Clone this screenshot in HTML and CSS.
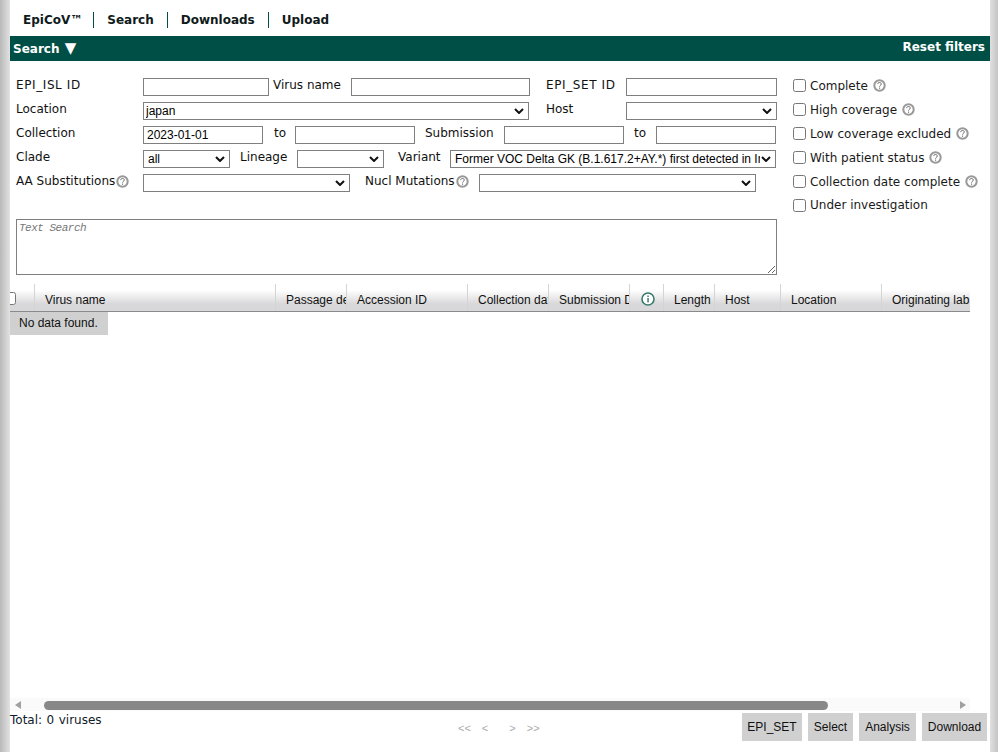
FILE: index.html
```html
<!DOCTYPE html>
<html lang="en">
<head>
<meta charset="utf-8">
<title>EpiCoV Search</title>
<link rel="stylesheet" href="styles.css">
</head>
<body>
<svg class="defs" width="0" height="0" aria-hidden="true">
  <symbol id="help" viewBox="0 0 13 13">
    <circle cx="6.5" cy="6.5" r="5.2" fill="#fff" stroke="#999" stroke-width="2"/>
    <path d="M4.7 5.1c0-1 .8-1.6 1.8-1.6s1.8.6 1.8 1.5c0 1.3-1.7 1.3-1.7 2.6" fill="none" stroke="#666" stroke-width="1"/>
    <rect x="6" y="8.6" width="1.1" height="1.1" fill="#666"/>
  </symbol>
</svg>
<div class="page">
  <nav class="nav">
    <a class="nav-item first">EpiCoV™</a>
    <a class="nav-item">Search</a>
    <a class="nav-item">Downloads</a>
    <a class="nav-item last">Upload</a>
  </nav>
  <div class="bar">
    <span class="bar-title">Search <span class="bar-arrow">▼</span></span>
    <span class="bar-reset">Reset filters</span>
  </div>
  <form class="filters">
    <div class="fields">
      <div class="row">
        <label class="lab l-main caps">EPI_ISL ID</label>
        <input class="ctl w126" type="text">
        <label class="lab l-virus">Virus name</label>
        <input class="ctl w179" type="text">
        <label class="lab l-set caps">EPI_SET ID</label>
        <input class="ctl w151" type="text">
      </div>
      <div class="row">
        <label class="lab l-main">Location</label>
        <select class="ctl w386 pad-sm"><option>japan</option></select>
        <label class="lab l-host">Host</label>
        <select class="ctl w151"><option></option></select>
      </div>
      <div class="row">
        <label class="lab l-main">Collection</label>
        <input class="ctl w120" type="text" value="2023-01-01">
        <label class="lab l-to1">to</label>
        <input class="ctl w120" type="text">
        <label class="lab l-sub">Submission</label>
        <input class="ctl w120" type="text">
        <label class="lab l-to2">to</label>
        <input class="ctl w120" type="text">
      </div>
      <div class="row">
        <label class="lab l-main">Clade</label>
        <select class="ctl w87"><option>all</option></select>
        <label class="lab l-lin">Lineage</label>
        <select class="ctl w87"><option></option></select>
        <label class="lab l-var">Variant</label>
        <select class="ctl w326"><option>Former VOC Delta GK (B.1.617.2+AY.*) first detected in India</option></select>
      </div>
      <div class="row">
        <label class="lab l-main">AA Substitutions<svg class="help tight"><use href="#help"/></svg></label>
        <select class="ctl w207"><option></option></select>
        <label class="lab l-nucl">Nucl Mutations<svg class="help tight"><use href="#help"/></svg></label>
        <select class="ctl w277"><option></option></select>
      </div>
      <textarea class="search-text" placeholder="Text Search"></textarea>
    </div>
    <div class="checks">
      <label class="check"><input type="checkbox">Complete<svg class="help"><use href="#help"/></svg></label>
      <label class="check"><input type="checkbox">High coverage<svg class="help"><use href="#help"/></svg></label>
      <label class="check"><input type="checkbox">Low coverage excluded<svg class="help"><use href="#help"/></svg></label>
      <label class="check"><input type="checkbox">With patient status<svg class="help"><use href="#help"/></svg></label>
      <label class="check"><input type="checkbox">Collection date complete<svg class="help"><use href="#help"/></svg></label>
      <label class="check"><input type="checkbox">Under investigation</label>
    </div>
  </form>
  <section class="grid">
    <div class="thead">
      <div class="th c-check"><input type="checkbox"></div>
      <div class="th c-name">Virus name</div>
      <div class="th c-pass">Passage details/history</div>
      <div class="th c-acc">Accession ID</div>
      <div class="th c-col">Collection date</div>
      <div class="th c-subm">Submission Date</div>
      <div class="th c-info">
        <svg class="info" viewBox="0 0 14 14"><circle cx="7" cy="7" r="6" fill="#fff" stroke="#3a7a6e" stroke-width="1.6"/><rect x="6.3" y="6" width="1.5" height="4.4" fill="#3a7a6e"/><rect x="6.3" y="3.5" width="1.5" height="1.5" fill="#3a7a6e"/></svg>
      </div>
      <div class="th c-len">Length</div>
      <div class="th c-host">Host</div>
      <div class="th c-loc">Location</div>
      <div class="th c-lab">Originating lab</div>
    </div>
    <div class="empty">No data found.</div>
  </section>
  <div class="scroll">
    <span class="arrow left"></span>
    <div class="track"><div class="thumb"></div></div>
    <span class="arrow right"></span>
  </div>
  <footer class="foot">
    <div class="total">Total: 0 viruses</div>
    <div class="pager"><span>&lt;&lt;</span><span>&lt;</span><span class="pager-gap">&gt;</span><span>&gt;&gt;</span></div>
    <div class="actions">
      <button class="btn" type="button">EPI_SET</button>
      <button class="btn" type="button">Select</button>
      <button class="btn" type="button">Analysis</button>
      <button class="btn" type="button">Download</button>
    </div>
  </footer>
</div>
</body>
</html>
```
FILE: styles.css
```css
* { box-sizing: border-box; }
html, body { margin: 0; height: 100%; }
body {
  overflow: hidden;
  background: linear-gradient(to right, #b8b8b8 0, #e2e2e2 10px, #e2e2e2 990px, #e0e0e0 990px, #c4c4c4 998px);
  font-family: "DejaVu Sans", Verdana, sans-serif;
  font-size: 12px;
  color: #111;
}
.defs { position: absolute; }
.page {
  width: 980px;
  height: 752px;
  margin-left: 10px;
  background: #fff;
  display: flex;
  flex-direction: column;
}

/* top navigation */
.nav { height: 36px; display: flex; align-items: center; padding: 3px 0 0 13px; }
.nav-item {
  font-weight: bold;
  font-size: 12px;
  color: #0f1a1a;
  padding: 0 13px 0 13px;
  line-height: 16px;
  border-right: 1px solid #00504a;
}
.nav-item.first { padding: 0 11px 0 0; }
.nav-item.last { border-right: 0; }

/* title bar */
.bar {
  height: 25px;
  background: #004f46;
  color: #fff;
  font-weight: bold;
  font-size: 12px;
  display: flex;
  justify-content: space-between;
  padding: 0 5px 0 3px;
}
.bar-title { line-height: 26px; }
.bar-arrow { font-size: 15px; line-height: 14px; font-weight: normal; margin-left: 1px; }
.bar-reset { line-height: 23px; }

/* filters */
.filters { display: flex; padding: 17px 0 0 6px; height: 223px; }
.fields { width: 761px; flex: none; }
.row { display: flex; height: 18px; margin-bottom: 6px; align-items: flex-start; }
.row > * { flex: none; }
.lab { line-height: 14px; white-space: nowrap; display: flex; align-items: center; }
.caps { letter-spacing: .6px; }
.ctl {
  height: 18px;
  border: 1px solid #7f7f7f;
  border-radius: 0;
  background: #fff;
  padding: 1px 3px;
  margin: 0;
  font-family: "Liberation Sans", Arial, sans-serif;
  font-size: 12px;
  color: #000;
  outline: 0;
}
select.ctl {
  appearance: none;
  padding: 0 15px 1px 4px;
  background: #fff url("data:image/svg+xml,%3Csvg xmlns='http://www.w3.org/2000/svg' width='10' height='6'%3E%3Cpath d='M1 1l4 4 4-4' fill='none' stroke='%23111' stroke-width='2'/%3E%3C/svg%3E") no-repeat right 4px center;
}
select.ctl.pad-sm { padding-left: 2px; }
.l-main { width: 127px; }
.l-virus { width: 82px; padding-left: 4px; }
.l-set { width: 80px; margin-left: 16px; }
.l-host { width: 80px; margin-left: 17px; }
.l-to1 { width: 32px; padding-left: 11px; }
.l-sub { width: 89px; padding-left: 10px; }
.l-to2 { width: 32px; padding-left: 10px; }
.l-lin { width: 67px; padding-left: 10px; }
.l-var { width: 66px; padding-left: 14px; }
.l-nucl { width: 129px; padding-left: 15px; }
.w87 { width: 87px; }
.w120 { width: 120px; }
.w126 { width: 126px; }
.w151 { width: 151px; }
.w179 { width: 179px; }
.w207 { width: 207px; }
.w277 { width: 277px; }
.w326 { width: 326px; }
.w386 { width: 386px; }
.help { width: 13px; height: 13px; margin-left: 5px; flex: none; }
.help.tight { margin-left: 1px; }
.search-text {
  display: block;
  width: 761px;
  height: 56px;
  margin-top: 27px;
  border: 1px solid #7f7f7f;
  border-radius: 0;
  padding: 2px 2px;
  font-family: "Liberation Mono", monospace;
  font-size: 11px;
  letter-spacing: -.5px;
  outline: 0;
}
.search-text::placeholder { color: #777; font-style: italic; }

.checks { margin-left: 16px; }
.check { display: flex; align-items: center; height: 15px; margin-bottom: 9px; white-space: nowrap; color: #1a1a1a; }
.check input { width: 13px; height: 13px; margin: 0 4px 0 0; flex: none; }
.check:last-child { margin-top: -1px; }
.check:last-child input { margin-top: 2px; }

/* data grid */
.grid { flex: 1; width: 960px; }
.thead {
  height: 28px;
  display: flex;
  overflow: hidden;
  border-bottom: 1px solid #8a8a8a;
  background: linear-gradient(to bottom, #fff 0, #fff 6px, #d8d8da 20px, #d8d8da 100%);
  font-family: "Liberation Sans", Arial, sans-serif;
  font-size: 12px;
}
.th {
  flex: none;
  overflow: hidden;
  white-space: nowrap;
  padding: 9px 0 0 10px;
  line-height: 14px;
  border-right: 1px solid #d4d4d4;
}
.c-check { width: 25px; padding: 8px 0 0; }
.c-check input { width: 13px; height: 13px; margin: 0 0 0 -7px; }
.c-name { width: 241px; }
.c-pass { width: 71px; }
.c-acc { width: 121px; }
.c-col { width: 81px; }
.c-subm { width: 81px; }
.c-info { width: 34px; padding: 8px 0 0 11px; }
.info { width: 14px; height: 14px; display: block; }
.c-len { width: 51px; }
.c-host { width: 66px; }
.c-loc { width: 101px; }
.c-lab { width: 88px; border-right: 0; }
.empty {
  width: 98px;
  height: 23px;
  background: #d0d0d0;
  font-family: "Liberation Sans", Arial, sans-serif;
  font-size: 12px;
  line-height: 23px;
  padding-left: 9px;
}

/* horizontal scrollbar */
.scroll { width: 960px; height: 13px; display: flex; align-items: center; background: #fafafa; flex: none; }
.arrow { flex: none; width: 0; height: 0; margin-top: 1px; border-top: 4px solid transparent; border-bottom: 4px solid transparent; }
.arrow.left { border-right: 6px solid #a0a0a0; margin-left: 5px; margin-right: 4px; }
.arrow.right { border-left: 6px solid #a0a0a0; margin-left: 5px; margin-right: 4px; }
.track { flex: 1; height: 9px; margin-top: 1px; padding-left: 19px; }
.thumb { width: 784px; height: 9px; border-radius: 5px; background: #888; }

/* footer */
.foot { height: 41px; flex: none; display: flex; }
.total { width: 448px; padding-top: 2px; line-height: 14px; color: #10202a; word-spacing: .7px; }
.pager {
  width: 284px;
  padding-top: 11px;
  font-family: "Liberation Sans", Arial, sans-serif;
  font-size: 11px;
  line-height: 12px;
  color: #aaa;
  display: flex;
  gap: 11px;
}
.pager-gap { margin-left: 10px; }
.actions { display: grid; grid-template-columns: 60px 45px 57px 65px; column-gap: 6px; padding-top: 2px; height: 30px; }
.btn {
  height: 28px;
  border: 0;
  padding: 0;
  background: #d0d0d0;
  font-family: "Liberation Sans", Arial, sans-serif;
  font-size: 12px;
  color: #111;
}
```
